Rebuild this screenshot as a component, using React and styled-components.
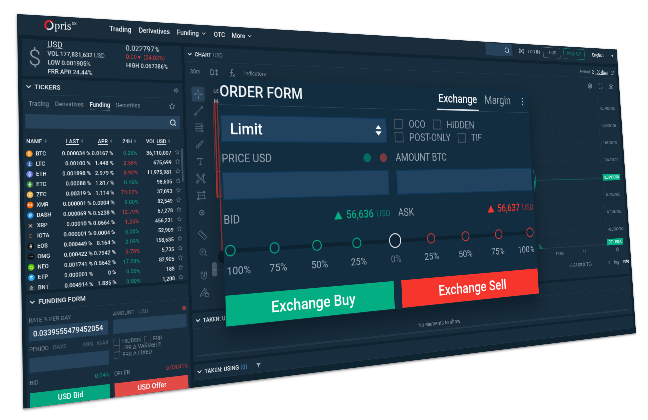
import React, { useState } from "react";
import styled, { createGlobalStyle, css } from "styled-components";
import {
  Search, ChevronDown, Star, Settings, Type, Ruler, ZoomIn, Magnet,
  Maximize, Camera, Filter, MoreVertical, ExternalLink, Brush, Radio,
} from "lucide-react";

const c = {
  page: "#102331",
  panel: "#182d3d",
  line: "#22394a",
  field: "#27435b",
  text: "#e9edf0",
  dim: "#71808c",
  faint: "#5b6c79",
  green: "#03ae82",
  greenDim: "#0b9a78",
  red: "#f6352d",
  redDim: "#c23c40",
};

const Global = createGlobalStyle`
  * { box-sizing: border-box; }
  html, body { margin: 0; background: #fff; }
  body { font-family: Roboto, "Liberation Sans", sans-serif; overflow: hidden; }
  button, input, select { font-family: inherit; margin: 0; }
  a { color: inherit; text-decoration: none; }
`;

const Scene = styled.main`
  position: relative;
  width: 100%;
  height: 100vh;
  overflow: hidden;
`;

/* The terminal stands in perspective: its right side recedes from the viewer. */
const Board = styled.div`
  width: 250%;
  background: ${c.page};
  color: ${c.text};
  will-change: transform;
  transform-origin: 0 0;
  transform: matrix3d(
    0.5158, 0.0336, 0, 0.00023609,
    0.00729, 0.50068, 0, -0.00004347,
    0, 0, 1, 0,
    17, 14, 0, 1
  );
  box-shadow: 0 2px 5px rgba(0, 0, 0, 0.55);
`;

/* ---------- top bar ---------- */

const TopBar = styled.header`
  display: flex;
  align-items: center;
  height: 41px;
  padding: 0 14px 4px 52px;
  background: #1a2d3d;
`;

const Brand = styled.a`
  display: flex;
  align-items: center;
  width: 136px;
  font: 23px "Liberation Serif", serif;
  color: #eef1f3;
  sup { font: 8px Roboto, sans-serif; margin: 0 0 12px 1px; }
`;

const Nav = styled.nav`
  display: flex;
  gap: 16px;
  flex: 1;
  font-size: 14px;
  font-weight: 500;
  a { display: flex; align-items: center; gap: 4px; }
`;

const Tools = styled.div`
  display: flex;
  align-items: center;
  gap: 11px;
  font-size: 13px;
  color: #b4bec5;
`;

const SearchBox = styled.label`
  display: flex;
  align-items: center;
  justify-content: flex-end;
  width: ${(p) => p.$w || "auto"};
  height: ${(p) => p.$h};
  margin: ${(p) => p.$m || 0};
  padding: 0 8px 0 4px;
  background: ${c.field};
  color: #c9d1d7;
  input {
    flex: 1;
    min-width: 0;
    border: 0;
    outline: 0;
    background: transparent;
    color: ${c.text};
  }
`;

const OutlineButton = styled.button`
  height: 28px;
  padding: 0 12px;
  font-size: 13px;
  border: 1px solid ${(p) => (p.$accent ? "#0b7f66" : "#5d6c78")};
  border-radius: 3px;
  background: transparent;
  color: ${(p) => (p.$accent ? "#0b8f70" : "#8d99a3")};
`;

const Language = styled.button`
  display: flex;
  align-items: center;
  gap: 28px;
  padding: 0 0 0 16px;
  border: 0;
  background: none;
  color: #d5dbdf;
  font-size: 13px;
  &::after {
    content: "";
    border: 4px solid transparent;
    border-top: 5px solid #d5dbdf;
    border-bottom: 0;
  }
`;

/* ---------- panels ---------- */

const Workspace = styled.div`
  display: grid;
  grid-template-columns: 337px 1fr;
  gap: 7px;
  padding: 8px 8px 0;
`;

const Column = styled.div`
  display: flex;
  flex-direction: column;
  gap: 6px;
  min-width: 0;
`;

const Panel = styled.section`
  background: ${c.panel};
  position: relative;
`;

const TitleRow = styled.div`
  display: flex;
  align-items: center;
  height: 32px;
  padding: 0 8px 0 5px;
  border-bottom: 1px solid ${c.line};
  color: ${c.dim};
`;

const Title = styled.h2`
  display: flex;
  align-items: center;
  gap: 4px;
  flex: 1;
  margin: 0;
  font-size: ${(p) => (p.$small ? "12px" : "13px")};
  font-weight: 500;
  color: ${c.text};
  span { color: #8795a0; font-weight: 400; }
  em { color: #4c7fb5; font-style: normal; }
  svg:last-child { margin-left: ${(p) => (p.$filter ? "18px" : 0)}; }
`;

const PanelTitle = ({ children, small, filter, end }) => (
  <TitleRow>
    <Title $small={small} $filter={filter}>
      <ChevronDown size={15} strokeWidth={3} />
      {children}
      {filter && <Filter size={11} fill="#9ba7b0" color="#9ba7b0" />}
    </Title>
    {end}
  </TitleRow>
);

const Summary = styled(Panel)`
  display: grid;
  grid-template-columns: 51px 163px 1fr;
  height: 73px;
`;

const Currency = styled.div`
  display: flex;
  align-items: center;
  justify-content: center;
  font-size: 44px;
  font-weight: 300;
  color: #9ba5ac;
`;

const Stats = styled.div`
  display: flex;
  flex-direction: column;
  font-size: 12px;
  line-height: 18px;
  font-weight: 500;
  color: #d5dbdf;
  a { font-size: 16px; font-weight: 400; text-decoration: underline; }
  strong { font-size: 15px; font-weight: 400; }
  span { font-weight: 400; color: #a9b3ba; }
  em { font-style: normal; color: #e03c3c; font-weight: 400; }
`;

const Tabs = styled.div`
  display: flex;
  align-items: center;
  gap: 12px;
  height: 34px;
  padding: 0 17px 0 12px;
  color: #8b98a2;
  svg { margin-left: auto; }
`;

const Tab = styled.button`
  padding: 4px 0 3px;
  border: 0;
  border-bottom: 1px solid ${(p) => (p.$on ? "#dfe4e8" : "transparent")};
  background: none;
  font-size: 12px;
  font-weight: ${(p) => (p.$on ? 500 : 400)};
  color: ${(p) => (p.$on ? "#eef1f3" : "#8b98a2")};
`;

const TableWrap = styled.div`
  position: relative;
  height: 303px;
  margin-top: 12px;
  overflow: hidden;
`;

const ScrollThumb = styled.div`
  position: absolute;
  top: 28px;
  right: 3px;
  width: 4px;
  height: 70px;
  border-radius: 2px;
  background: #3d5365;
`;

const Table = styled.table`
  width: 100%;
  table-layout: fixed;
  border-collapse: collapse;
  font-size: 11px;
  font-weight: 500;
  th, td { padding: 0; text-align: right; white-space: nowrap; }
  th { height: 27px; font-weight: 500; }
  th:nth-child(2) { padding-right: 12px; }
  td { height: 20px; }
  th:first-child { text-align: left; padding-left: 6px; }
  u { text-underline-offset: 2px; }
`;

const Col = styled.col`
  width: ${(p) => p.$w};
`;

const CoinName = styled.span`
  display: flex;
  align-items: center;
  gap: 6px;
  padding-left: 5px;
`;

const Change = styled.td`
  color: ${(p) => (p.$up ? c.greenDim : c.redDim)};
`;

/* ---------- funding form ---------- */

const FundingGrid = styled.form`
  display: grid;
  grid-template-columns: 1fr 1fr;
  gap: 10px;
  padding: 6px 6px 0 5px;
`;

const Side = styled.div`
  display: flex;
  flex-direction: column;
  min-width: 0;
`;

const Caption = styled.div`
  display: flex;
  align-items: center;
  justify-content: space-between;
  gap: 10px;
  height: ${(p) => p.$h};
  font-size: 11px;
  color: #7b8994;
  span { color: ${c.faint}; margin-left: 8px; }
  b { font-weight: 400; color: ${(p) => p.$tone}; }
`;

const Field = styled.input`
  width: 100%;
  height: ${(p) => (p.$big ? "48px" : "28px")};
  padding: 0 7px;
  border: ${(p) => (p.$big ? "2px solid #0e3a5c" : "1px solid #21405a")};
  border-radius: 0;
  background: ${(p) => (p.$big ? "#22435f" : c.field)};
  color: #f0f3f5;
  font-size: ${(p) => (p.$big ? "24px" : "14px")};
  font-weight: 500;
`;

const Dot = styled.i`
  width: ${(p) => p.$size};
  height: ${(p) => p.$size};
  border-radius: 50%;
  background: ${(p) => p.$color};
`;

const Options = styled.div`
  display: flex;
  flex-wrap: wrap;
  align-content: center;
  column-gap: ${(p) => (p.$big ? "18px" : "8px")};
  row-gap: ${(p) => (p.$big ? "4px" : 0)};
  height: ${(p) => (p.$big ? "48px" : "59px")};
  flex-grow: ${(p) => (p.$big ? 0 : 1)};
`;

const Tick = styled.label`
  display: flex;
  align-items: center;
  gap: ${(p) => (p.$big ? "14px" : "5px")};
  font-size: ${(p) => (p.$big ? "20px" : "11px")};
  line-height: ${(p) => (p.$big ? "22px" : "13px")};
  color: ${(p) => (p.$big ? "#8d9ba6" : "#7b8994")};
  input {
    appearance: none;
    width: ${(p) => (p.$big ? "21px" : "13px")};
    height: ${(p) => (p.$big ? "20px" : "13px")};
    border: ${(p) => (p.$big ? "2px" : "1px")} solid #46535c;
  }
`;

const Action = styled.button`
  height: ${(p) => (p.$big ? "52px" : "27px")};
  border: 0;
  background: ${(p) => p.$bg};
  color: #fff;
  font-size: ${(p) => (p.$big ? "28px" : "14px")};
  font-weight: 500;
`;

/* ---------- chart ---------- */

const ChartBar = styled.div`
  display: flex;
  align-items: center;
  gap: 22px;
  height: 42px;
  padding: 0 14px 0 12px;
  font-size: 12px;
  color: #80909c;
`;

const Spacer = styled.i`
  flex: 1;
`;

const ChartBody = styled.div`
  display: grid;
  grid-template-columns: 53px 1fr 76px;
  height: 481px;
`;

const ToolColumn = styled.div`
  padding: 9px 0 0 14px;
  color: #5f7280;
`;

const Tool = styled.button`
  display: flex;
  align-items: center;
  justify-content: center;
  width: 30px;
  height: 32px;
  margin: ${(p) => (p.$gap ? "15px" : "4px")} 0 4px;
  padding: 0;
  border: 0;
  border-radius: 3px;
  color: ${(p) => (p.$on ? "#8fa0ad" : "#5f7280")};
  background: ${(p) => (p.$on ? "#29445b" : "none")};
  &:first-child { margin-top: 2px; }
`;

const Plot = styled.div`
  position: relative;
  min-width: 0;
  > svg { display: block; width: 100%; height: 401px; }
`;

const PlotLabel = styled.div`
  position: absolute;
  top: 10px;
  left: 12px;
  font-size: 12px;
  line-height: 21px;
  font-weight: 500;
  color: #a8b3bb;
`;

const CollapseTab = styled.button`
  position: absolute;
  top: 384px;
  left: -5px;
  width: 12px;
  height: 30px;
  padding: 0;
  border: 0;
  border-radius: 5px;
  background: #4a5f70;
  color: #b9c3ca;
  font-size: 10px;
`;

const TimeRow = styled.div`
  display: flex;
  justify-content: flex-end;
  align-items: center;
  gap: 66px;
  height: 28px;
  padding-right: 74px;
  font-size: 11px;
  color: #7b8994;
`;

const FootRow = styled.div`
  display: flex;
  justify-content: ${(p) => (p.$end ? "flex-end" : "center")};
  align-items: center;
  gap: 14px;
  height: ${(p) => (p.$thin ? "28px" : "38px")};
  padding-right: ${(p) => (p.$end ? "58px" : 0)};
  font-size: 12px;
  color: #8795a0;
  b { color: #e4e9ec; font-weight: 700; }
`;

const PriceAxis = styled.div`
  border-left: 1px solid ${c.line};
  height: 401px;
  padding-top: 16px;
  font-size: 11px;
  color: #7b8994;
`;

const PriceTick = styled.div`
  display: flex;
  align-items: center;
  height: ${(p) => (p.$last ? "20px" : "46px")};
  padding-left: ${(p) => (p.$mark ? 0 : "8px")};
  span {
    padding: ${(p) => (p.$mark ? "2px 6px" : 0)};
    background: ${(p) => (p.$mark ? c.green : "none")};
    color: ${(p) => (p.$mark ? "#fff" : "inherit")};
  }
`;

const Empty = styled.div`
  display: flex;
  align-items: center;
  justify-content: center;
  height: 54px;
  padding-top: 24px;
  font-size: 13px;
  color: #9aa6af;
`;

const ScrollTrack = styled.div`
  height: 4px;
  margin: 0 8px 9px;
  background: #233a4b;
`;

/* ---------- order form ---------- */

/* Floats in front of the board, so it has its own, nearer projection. */
const OrderPanel = styled.form`
  position: absolute;
  top: 0;
  left: 0;
  width: 720px;
  background: #122c40;
  color: #f2f5f7;
  will-change: transform;
  transform-origin: 0 0;
  transform: matrix3d(
    0.59493, 0.04653, 0, 0.00031293,
    0.00738, 0.56648, 0, -0.00004857,
    0, 0, 1, 0,
    218, 78, 0, 1
  );
  box-shadow: 0 18px 36px rgba(5, 18, 28, 0.6);
`;

const OrderHead = styled.div`
  display: flex;
  align-items: center;
  height: 47px;
  padding: 0 5px 0 2px;
  border-bottom: 1px solid #2b4456;
  h2 { flex: 1; margin: 0; font-size: 27px; font-weight: 500; }
`;

const OrderTab = styled.button`
  align-self: stretch;
  margin-right: ${(p) => (p.$on ? "12px" : "18px")};
  padding: 2px 4px 0;
  border: 0;
  border-bottom: 3px solid ${(p) => (p.$on ? "#d8dee2" : "transparent")};
  background: none;
  color: ${(p) => (p.$on ? "#f2f5f7" : "#98a5af")};
  font-size: 23px;
  font-weight: ${(p) => (p.$on ? 500 : 400)};
`;

const OrderGrid = styled.div`
  display: grid;
  grid-template-columns: 1fr 1fr;
  column-gap: 18px;
  padding: 17px 2px 0;
`;

const SelectBox = styled.div`
  display: grid;
  align-items: center;
  > * { grid-area: 1 / 1; }
  > svg { justify-self: end; margin-right: 11px; pointer-events: none; }
`;

const Select = styled.select`
  appearance: none;
  height: 48px;
  padding: 0 16px;
  border: 2px solid #0e3a5c;
  border-radius: 0;
  background: #22435f;
  color: #fff;
  font-size: 28px;
  font-weight: 500;
`;

const OrderLabel = styled.div`
  display: flex;
  align-items: center;
  height: ${(p) => p.$h};
  padding-top: 4px;
  font-size: 20px;
  color: #9aa7b1;
  label { flex: 1; }
  i { margin-right: ${(p) => (p.$dots ? "20px" : 0)}; }
  i:last-child { margin-right: 2px; }
`;

const Quote = styled.output`
  display: flex;
  align-items: center;
  gap: 6px;
  color: ${(p) => p.$color};
  font-weight: 500;
  small { font-size: 17px; font-weight: 400; opacity: 0.6; }
  &::before {
    content: "";
    margin-right: 2px;
    border: 9px solid transparent;
    border-top: 0;
    border-bottom: 15px solid ${(p) => p.$color};
  }
`;

const SliderArea = styled.div`
  display: grid;
  align-items: center;
  height: 46px;
  padding: 0 5px 0 2px;
  > * { grid-area: 1 / 1; }
`;

const Rail = styled.div`
  height: 7px;
  margin: 0 8px;
  background: #0d2231;
`;

const Stops = styled.div`
  display: flex;
  justify-content: space-between;
  align-items: center;
  padding: 0 1px;
`;

const Stop = styled.i`
  width: 20px;
  height: 20px;
  border: 2px solid ${(p) => p.$color};
  border-radius: 50%;
  background: #0f2839;
`;

const thumb = css`
  appearance: none;
  width: 28px;
  height: 28px;
  border: 2px solid #e3e8eb;
  border-radius: 50%;
  background: #0f2434;
`;

const Range = styled.input`
  appearance: none;
  width: 100%;
  background: transparent;
  &::-webkit-slider-thumb { ${thumb} }
  &::-moz-range-thumb { ${thumb} }
`;

const Marks = styled.div`
  display: grid;
  grid-template-columns: 58px repeat(7, 1fr) 58px;
  align-items: center;
  height: 22px;
  padding: 0 6px 0 5px;
  font-size: 19px;
  color: #a3afb8;
  text-align: center;
  span:first-child { text-align: left; }
  span:last-child { text-align: right; }
  span:nth-child(5) { color: #667683; }
`;

const Actions = styled.div`
  display: grid;
  grid-template-columns: 1fr 1fr;
  gap: 18px;
  padding: 31px 1px 1px;
`;

/* ---------- data ---------- */

const coins = [
  ["BTC", "#f7931a", "0.000034 %", "0.0167 %", "0.25%", true, "36,110,007"],
  ["LTC", "#345d9d", "0.00100 %", "1.448 %", "2.58%", false, "675,699"],
  ["ETH", "#627eea", "0.001898 %", "2.979 %", "8.92%", false, "11,975,981"],
  ["ETC", "#328332", "0.00088 %", "1.817 %", "0.16%", true, "98,605"],
  ["ZEC", "#ecb244", "0.00319 %", "1.114 %", "74.07%", false, "37,093"],
  ["XMR", "#ff6600", "0.000001 %", "0.0004 %", "0.00%", true, "82,549"],
  ["DASH", "#1c8fe0", "0.000069 %", "0.5238 %", "12.79%", false, "67,278"],
  ["XRP", "#23292f", "0.00010 %", "0.0664 %", "1.25%", false, "456,231"],
  ["IOTA", "#242b31", "0.000001 %", "0.0004 %", "0.00%", true, "52,909"],
  ["EOS", "#0a0c0e", "0.000449 %", "0.164 %", "2.09%", true, "158,635"],
  ["OMG", "#101214", "0.000422 %", "0.7942 %", "3.78%", false, "5,735"],
  ["NEO", "#58bf00", "0.001741 %", "0.5642 %", "17.23%", true, "82,905"],
  ["ETP", "#1fa0e8", "0.000001 %", "0 %", "0.00%", true, "188"],
  ["BNT", "#2c3a45", "0.004914 %", "1.835 %", "0.00%", true, "1,208"],
];

const marks = {
  BTC: "M5 3v6M5 3h2q1 1.500 0 3q1.500 1.500 0 3h-2M5 6h2",
  LTC: "M6.500 3L5 9h3M4.500 6.500l3-1",
  ETH: "M6 2L4 6l2 1.500L8 6zM4.500 7.500L6 10l1.500-2.500",
  ETC: "M6 2L4 6h4zM4.500 7.500L6 10l1.500-2.500",
  ZEC: "M4 4h4L4 8h4M6 3v6",
  XMR: "M3 8V4l3 3 3-3v4",
  DASH: "M4.500 4H8L7 8H4M4 6h2",
  XRP: "M3 3.500l3 2.500 3-2.500M3 9l3-2.500L9 9",
  IOTA: "M4 4h.1M8 4h.1M6 6h.1M4 8h.1M8 8h.1M6 3h.1M6 9h.1",
  EOS: "M6 2L4 5.500 5 9h2l1-3.500zM4 6h4",
  OMG: "M3 6h6",
  NEO: "M4 8V4l4 1v4z",
  ETP: "M4 4h4M4 6h3M4 8h4",
  BNT: "M6 3L4 6h4zM4 8h4",
};

const CoinIcon = ({ code, color }) => (
  <svg width="13" height="13" viewBox="0 0 12 12" aria-hidden="true">
    <circle cx="6" cy="6" r="6" fill={color} />
    <path d={marks[code]} fill="none" stroke="#fff" strokeOpacity="0.85" strokeWidth="1" strokeLinecap="round" />
  </svg>
);

const SortIcon = () => (
  <svg width="8" height="9" viewBox="0 0 8 9" aria-hidden="true">
    <path d="M2 3.500L4 1l2 2.500zM2 5.500L4 8l2-2.500z" fill="#8b98a2" />
  </svg>
);

const stroke = { fill: "none", stroke: "currentColor", strokeWidth: 1.4 };

const toolIcons = [
  <svg width="22" height="22" viewBox="0 0 22 22" {...stroke}><path d="M11 1v7M11 14v7M1 11h7M14 11h7M10.500 11h1" /></svg>,
  <svg width="22" height="22" viewBox="0 0 22 22" {...stroke}><path d="M5 17L17 5" /><circle cx="3.500" cy="18.500" r="2" /><circle cx="18.500" cy="3.500" r="2" /></svg>,
  <svg width="22" height="22" viewBox="0 0 22 22" {...stroke}><path d="M2 3h17M2 8h15M2 13h17M2 18h14" /><circle cx="18" cy="8" r="2" /><circle cx="18" cy="18" r="2" /></svg>,
  <Brush size={20} strokeWidth={1.5} />,
  <Type size={20} strokeWidth={1.5} />,
  <svg width="22" height="22" viewBox="0 0 22 22" {...stroke}><path d="M4 18L5 5l6 7 6-8 1 14M5 17l6-5 6 5" /><circle cx="4" cy="3" r="2" /><circle cx="18" cy="3" r="2" /><circle cx="3" cy="19" r="2" /><circle cx="19" cy="19" r="2" /></svg>,
  <svg width="22" height="22" viewBox="0 0 22 22" {...stroke}><path d="M4 1v20M1 4h18M4 10h15M4 18h17M18 10v8" /><circle cx="4" cy="18" r="2" /><circle cx="18" cy="4" r="2" /></svg>,
  <svg width="14" height="14" viewBox="0 0 14 14" {...stroke} strokeWidth="2"><circle cx="7" cy="7" r="5" /><circle cx="7" cy="7" r="1" /></svg>,
  <Ruler size={22} strokeWidth={1.4} />,
  <ZoomIn size={20} strokeWidth={1.5} />,
  <Magnet size={20} strokeWidth={1.5} transform="rotate(135)" />,
  <svg width="22" height="22" viewBox="0 0 22 22" {...stroke}><path d="M2 16L12 3l4 3L7 18l-5 1zM10 6l4 3" /><rect x="13" y="14" width="8" height="6" /><path d="M15 14v-2q2-2 4 0v2" /></svg>,
];

const toolNames = [
  "Cross", "Trend line", "Fibonacci", "Brush", "Text", "Patterns",
  "Prediction", "Icons", "Measure", "Zoom in", "Magnet", "Lock drawing",
];

const Chart = () => (
  <svg viewBox="0 0 1131 401" preserveAspectRatio="none" aria-label="USD funding chart">
    <g stroke="#1f3546" strokeWidth="1">
      {[39, 85, 131, 177, 223, 269, 315, 361].map((y) => <path key={y} d={`M0 ${y}H1131`} />)}
      {[56, 147, 238, 329, 420, 511, 602, 693, 784, 875, 966, 1057].map((x) => <path key={x} d={`M${x} 0V401`} />)}
    </g>
    <path d="M0 400H1131" stroke="#33495a" />
    <g stroke="#b93a38" fill="none">
      <path d="M14 40V250M20 44V370" strokeWidth="3" />
      <path d="M10 42V190M26 60V400" strokeWidth="1" />
      <rect x="12" y="192" width="12" height="54" strokeWidth="2" />
    </g>
    <path d="M24 76V230" stroke="#16775f" strokeWidth="2" />
    <circle cx="24" cy="374" r="14" fill="#0c1a25" />
    <path d="M895 227H1131" stroke="#0e7f68" strokeWidth="1" />
    <path d="M895 200V262M899 203V225M899 228V258" stroke="#0b9a78" strokeWidth="2" fill="none" />
    <path d="M899 401v-14l12 14z" fill="#0b7f66" />
  </svg>
);

const Heads = [
  ["NAME"], ["", "LAST"], ["", "APR"], ["24H"], ["VOL ", "USD"],
];

const LogoMark = () => (
  <svg width="22" height="22" viewBox="0 0 22 22" aria-hidden="true">
    <path d="M12 2a8 9 0 0 1 7 9a8 8 0 0 1-12 7" fill="none" stroke="#f0f2f4" strokeWidth="3" />
    <path d="M13 2a9 9 0 0 0-6 16" fill="none" stroke="#e2202c" strokeWidth="4" />
    <path d="M10 3q6-3 9 3" fill="none" stroke="#e2202c" strokeWidth="2" />
  </svg>
);

export default function App() {
  const [amount, setAmount] = useState(0);
  const [rate, setRate] = useState("0.0339555479452054");

  return (
    <>
      <Global />
      <Scene>
        <Board>
          <TopBar>
            <Brand href="#home" aria-label="Opris"><LogoMark />pris<sup>DX</sup></Brand>
            <Nav>
              <a href="#trading">Trading</a>
              <a href="#derivatives">Derivatives</a>
              <a href="#funding">Funding <ChevronDown size={15} /></a>
              <a href="#otc">OTC</a>
              <a href="#more">More <ChevronDown size={15} /></a>
            </Nav>
            <Tools>
              <SearchBox $w="86px" $h="31px" $m="0 10px 0 0">
                <input aria-label="Search markets" />
                <Search size={18} />
              </SearchBox>
              <Radio size={19} />
              <a href="#login">LOG IN</a>
              <OutlineButton type="button">TOUR</OutlineButton>
              <OutlineButton type="button" $accent>SIGN UP</OutlineButton>
              <Language type="button">English</Language>
            </Tools>
          </TopBar>

          <Workspace>
            <Column>
              <Summary>
                <Currency>$</Currency>
                <Stats>
                  <a href="#usd">USD</a>
                  <div>VOL 177,831,632 <span>USD</span></div>
                  <div>LOW 0.001905%</div>
                  <div>FRR APR 24.44%</div>
                </Stats>
                <Stats>
                  <strong>0.022797%</strong>
                  <em>0.00 ▾ &nbsp;(24.03%)</em>
                  <div>HIGH 0.067386%</div>
                </Stats>
              </Summary>

              <Panel>
                <PanelTitle end={<Settings size={11} strokeWidth={3} />}>TICKERS</PanelTitle>
                <Tabs>
                  <Tab type="button">Trading</Tab>
                  <Tab type="button">Derivatives</Tab>
                  <Tab type="button" $on>Funding</Tab>
                  <Tab type="button">Securities</Tab>
                  <Star size={14} />
                </Tabs>
                <SearchBox $h="28px" $m="4px 7px 0 5px">
                  <input aria-label="Search tickers" />
                  <Search size={16} strokeWidth={3} />
                </SearchBox>
                <TableWrap>
                  <Table>
                    <colgroup>
                      <Col $w="74px" /><Col $w="60px" /><Col $w="48px" />
                      <Col $w="51px" /><Col $w="75px" /><Col $w="19px" /><Col />
                    </colgroup>
                    <thead>
                      <tr>
                        {Heads.map(([plain, under], i) => (
                          <th key={i} scope="col">{plain}{under && <u>{under}</u>} <SortIcon /></th>
                        ))}
                        <td /><td />
                      </tr>
                    </thead>
                    <tbody>
                      {coins.map(([code, color, last, apr, day, up, vol]) => (
                        <tr key={code}>
                          <td><CoinName><CoinIcon code={code} color={color} />{code}</CoinName></td>
                          <td>{last}</td>
                          <td>{apr}</td>
                          <Change $up={up}>{day}</Change>
                          <td>{vol}</td>
                          <td><Star size={11} color="#73828e" /></td>
                          <td />
                        </tr>
                      ))}
                    </tbody>
                  </Table>
                  <ScrollThumb />
                </TableWrap>
              </Panel>

              <Panel>
                <PanelTitle>FUNDING FORM</PanelTitle>
                <FundingGrid>
                  <Side>
                    <Caption $h="24px"><label htmlFor="rate">RATE % PER DAY</label></Caption>
                    <Field id="rate" value={rate} onChange={(e) => setRate(e.target.value)} />
                    <Caption $h="31px">
                      <label htmlFor="period">PERIOD<span>DAYS</span></label>
                      <div><span>MIN</span><span>MAX</span></div>
                    </Caption>
                    <Field id="period" />
                    <Caption $h="38px" $tone={c.greenDim}>BID <b>0.04%</b></Caption>
                    <Action type="button" $bg="#03a67e">USD Bid</Action>
                  </Side>
                  <Side>
                    <Caption $h="24px">
                      <label htmlFor="amount-usd">AMOUNT<span>USD</span></label>
                      <Dot $size="9px" $color="#8f3b42" />
                    </Caption>
                    <Field id="amount-usd" />
                    <Options>
                      <Tick><input type="checkbox" />HIDDEN</Tick>
                      <Tick><input type="checkbox" />FRR</Tick>
                      <Tick><input type="checkbox" />FRR Δ VARIABLE</Tick>
                      <Tick><input type="checkbox" />FRR Δ FIXED</Tick>
                    </Options>
                    <Caption $h="38px" $tone="#d63c3d">OFFER <b>0.03041%</b></Caption>
                    <Action type="button" $bg="#e24a46">USD Offer</Action>
                  </Side>
                </FundingGrid>
              </Panel>
            </Column>

            <Column>
              <Panel>
                <PanelTitle small end={<ChartPeriod />}>CHART <span>USD</span></PanelTitle>
                <ChartBar>
                  <span>30m</span>
                  <svg width="22" height="18" viewBox="0 0 22 18" {...stroke} aria-hidden="true">
                    <path d="M5 1v3M5 14v3M2 4h6v10H2zM16 3v12M13 6l3-3 3 3M13 12l3 3 3-3" />
                  </svg>
                  <svg width="16" height="18" viewBox="0 0 16 18" {...stroke} aria-hidden="true">
                    <path d="M11 2q-4-2-4 3v8q0 4-4 3M3 8h8M10 12l5 5M15 12l-5 5" />
                  </svg>
                  <span>Indicators</span>
                  <Spacer />
                  <Settings size={17} />
                  <Maximize size={16} />
                  <Camera size={17} />
                </ChartBar>
                <ChartBody>
                  <ToolColumn>
                    {toolIcons.map((icon, i) => (
                      <Tool key={i} type="button" aria-label={toolNames[i]} $on={i === 0} $gap={i === 8 || i === 10}>
                        {icon}
                      </Tool>
                    ))}
                  </ToolColumn>
                  <Plot>
                    <Chart />
                    <PlotLabel>USD<br />MA</PlotLabel>
                    <CollapseTab type="button" aria-label="Collapse tools">‹</CollapseTab>
                    <TimeRow><span>12:00</span><span>14</span></TimeRow>
                    <FootRow $end>06:24:08 (UTC)</FootRow>
                  </Plot>
                  <div>
                    <PriceAxis>
                      <PriceTick><span>0.0700000</span></PriceTick>
                      <PriceTick><span>0.0600000</span></PriceTick>
                      <PriceTick><span>0.0500000</span></PriceTick>
                      <PriceTick><span>0.0400000</span></PriceTick>
                      <PriceTick $mark><span>0.0299000</span></PriceTick>
                      <PriceTick><span>0.0200000</span></PriceTick>
                      <PriceTick><span>0.0100000</span></PriceTick>
                      <PriceTick><span>-0.0000000</span></PriceTick>
                      <PriceTick $mark $last><span>001.106K</span></PriceTick>
                    </PriceAxis>
                    <FootRow $thin><Settings size={12} /></FootRow>
                    <FootRow><span>%</span><span>log</span><b>auto</b></FootRow>
                  </div>
                </ChartBody>
              </Panel>
              <Panel>
                <PanelTitle small filter>TAKEN: UNUSED <em>(0)</em></PanelTitle>
                <Empty>No elements to show</Empty>
                <ScrollTrack />
              </Panel>
              <Panel>
                <PanelTitle small filter>TAKEN: USING <em>(0)</em></PanelTitle>
              </Panel>
            </Column>
          </Workspace>
        </Board>

        <OrderPanel>
          <OrderHead>
            <h2>ORDER FORM</h2>
            <OrderTab type="button" $on>Exchange</OrderTab>
            <OrderTab type="button">Margin</OrderTab>
            <MoreVertical size={22} color="#aab5bd" />
          </OrderHead>
          <OrderGrid>
            <SelectBox>
              <Select aria-label="Order type" defaultValue="Limit">
                <option>Limit</option>
                <option>Market</option>
              </Select>
              <svg width="16" height="22" viewBox="0 0 16 22" fill="#fff" aria-hidden="true">
                <path d="M1 9L8 1l7 8zM1 13l7 8 7-8z" />
              </svg>
            </SelectBox>
            <Options $big>
              <Tick $big><input type="checkbox" />OCO</Tick>
              <Tick $big><input type="checkbox" />HIDDEN</Tick>
              <Tick $big><input type="checkbox" />POST-ONLY</Tick>
              <Tick $big><input type="checkbox" />TIF</Tick>
            </Options>
            <OrderLabel $h="52px" $dots>
              <label htmlFor="price">PRICE USD</label>
              <Dot $size="17px" $color="#056d60" />
              <Dot $size="17px" $color="#7b3942" />
            </OrderLabel>
            <OrderLabel $h="52px"><label htmlFor="amount">AMOUNT BTC</label></OrderLabel>
            <Field id="price" $big />
            <Field id="amount" $big />
            <OrderLabel $h="64px">
              <label htmlFor="bid">BID</label>
              <Quote id="bid" $color={c.green}>56,636 <small>USD</small></Quote>
            </OrderLabel>
            <OrderLabel $h="64px">
              <label htmlFor="ask">ASK</label>
              <Quote id="ask" $color={c.red}>56,637 <small>USD</small></Quote>
            </OrderLabel>
          </OrderGrid>
          <SliderArea>
            <Rail />
            <Stops>
              {[0, 1, 2, 3, 4, 5, 6, 7, 8].map((i) => (
                <Stop key={i} $color={i < 4 ? c.green : i > 4 ? "#d5373a" : "transparent"} />
              ))}
            </Stops>
            <Range
              type="range" min="-100" max="100" step="25" aria-label="Share of balance"
              value={amount} onChange={(e) => setAmount(Number(e.target.value))}
            />
          </SliderArea>
          <Marks>
            {["100%", "75%", "50%", "25%", "0%", "25%", "50%", "75%", "100%"].map((m, i) => (
              <span key={i}>{m}</span>
            ))}
          </Marks>
          <Actions>
            <Action type="button" $big $bg={c.green}>Exchange Buy</Action>
            <Action type="button" $big $bg={c.red}>Exchange Sell</Action>
          </Actions>
        </OrderPanel>
      </Scene>
    </>
  );
}

const Period = styled.div`
  display: flex;
  align-items: center;
  gap: 5px;
  font-size: 12px;
  color: #7f8e99;
  a { color: #dfe4e8; font-weight: 500; text-decoration: underline; }
  svg { margin-left: 5px; }
`;

function ChartPeriod() {
  return (
    <Period>
      Period: <a href="#period">2 - 30 days</a> <ExternalLink size={12} color="#6fa3d8" />
    </Period>
  );
}
